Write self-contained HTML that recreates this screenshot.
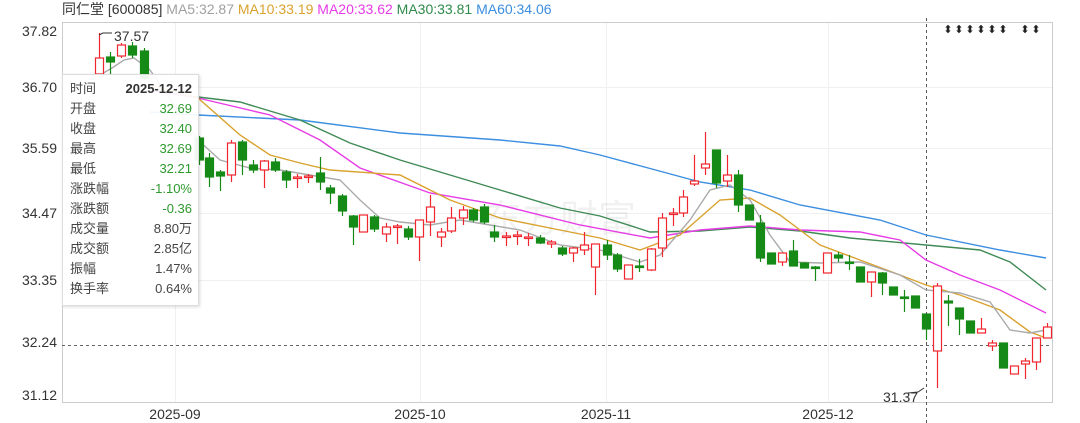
<!DOCTYPE html>
<html><head><meta charset="utf-8"><style>
body{margin:0;background:#fff;width:1080px;height:423px;overflow:hidden;font-family:"Liberation Sans","Noto Sans CJK SC",sans-serif;}
.t{position:absolute;font-size:14px;white-space:nowrap}
</style></head><body>
<div class="t" style="left:62px;top:-1px;color:#333">同仁堂 [600085] <span style="color:#a0a0a0">MA5:32.87</span> <span style="color:#d9a22e">MA10:33.19</span> <span style="color:#e63ce6">MA20:33.62</span> <span style="color:#2e8b4a">MA30:33.81</span> <span style="color:#3b8ee0">MA60:34.06</span></div>
<svg width="1080" height="423" style="position:absolute;left:0;top:0" font-family="Liberation Sans, sans-serif">
<g stroke="#f0f0f0" stroke-width="1">
<line x1="62" y1="87.5" x2="1052" y2="87.5"/><line x1="62" y1="148.5" x2="1052" y2="148.5"/><line x1="62" y1="213.5" x2="1052" y2="213.5"/><line x1="62" y1="280.5" x2="1052" y2="280.5"/>
<line x1="175.5" y1="22" x2="175.5" y2="402"/><line x1="420.5" y1="22" x2="420.5" y2="402"/><line x1="606.5" y1="22" x2="606.5" y2="402"/><line x1="828.5" y1="22" x2="828.5" y2="402"/>
</g>
<rect x="62.5" y="22.5" width="990" height="380" fill="none" stroke="#ccc"/>
<g font-size="14" fill="#333" text-anchor="end">
<text x="57" y="36">37.82</text><text x="57" y="92">36.70</text><text x="57" y="153">35.59</text><text x="57" y="218">34.47</text><text x="57" y="285">33.35</text><text x="57" y="347">32.24</text><text x="57" y="400">31.12</text>
</g>
<g font-size="14" fill="#333" text-anchor="middle">
<text x="175" y="419">2025-09</text><text x="420" y="419">2025-10</text><text x="606" y="419">2025-11</text><text x="828" y="419">2025-12</text>
</g>
<text x="560" y="232" font-size="38" fill="#000" opacity="0.05" text-anchor="middle" font-family="Noto Sans CJK SC, sans-serif">东方财富</text>
<line x1="62" y1="345.5" x2="1052" y2="345.5" stroke="#666" stroke-dasharray="3,3"/>
<line x1="926.5" y1="18" x2="926.5" y2="423" stroke="#555" stroke-dasharray="3,3"/>
<g fill="none" stroke-width="1.4">
<polyline stroke="#3b8ee0" points="150,112 198,115 300,120 400,133 500,140 560,146 600,155 700,182 750,190 800,205 880,220 926,235 1000,250 1046,258"/>
<polyline stroke="#3f8a55" points="150,90 198,97 240,102 300,120 350,143 400,160 450,175 500,190 560,208 600,216 650,232 700,231 750,227 800,231 850,238 926,245 980,250 1010,262 1046,290"/>
<polyline stroke="#e63ce6" points="150,90 198,98 270,115 320,140 360,168 430,193 500,205 580,225 650,238 700,230 750,226 800,230 860,232 900,240 926,260 960,275 1000,290 1046,313"/>
<polyline stroke="#d9a22e" points="150,85 198,98 240,135 270,155 300,163 330,170 400,175 450,200 500,218 560,230 600,238 640,250 680,235 720,200 750,198 780,215 820,245 860,260 900,275 926,285 960,295 1000,310 1030,332 1046,338"/>
<polyline stroke="#aaa" points="100,75 112,68 124,60 134,58 150,70 198,140 220,160 250,168 280,170 310,175 340,180 360,200 380,218 400,222 430,225 460,220 490,225 520,230 560,245 600,250 640,262 660,255 690,220 710,190 730,185 750,200 770,235 790,262 820,263 860,262 900,275 926,290 960,293 990,302 1010,330 1030,333 1046,330"/>
</g>
<g id="c"></g>
<g stroke="#333" fill="none"><polyline points="99,35 103,33 112,33"/><polyline points="924,388 918,392 908,393"/></g>
<text x="114" y="41" font-size="14" fill="#333">37.57</text>
<text x="883" y="402" font-size="14" fill="#333">31.37</text>
<g font-size="11" fill="#222" text-anchor="middle">
<text x="948" y="33">⬍</text><text x="959" y="33">⬍</text><text x="970" y="33">⬍</text><text x="981" y="33">⬍</text><text x="992" y="33">⬍</text><text x="1003" y="33">⬍</text><text x="1025" y="33">⬍</text><text x="1036" y="33">⬍</text>
</g>
</svg>
<div style="position:absolute;left:62px;top:74px;width:135px;height:230px;background:rgba(255,255,255,0.93);border:1px solid #ddd;box-shadow:1px 1px 3px rgba(0,0,0,.15);font-size:13px;line-height:20px;color:#444">
<div style="padding:4px 6px 0 7px">
<div style="display:flex;justify-content:space-between"><span>时间</span><b style="color:#333">2025-12-12</b></div>
<div style="display:flex;justify-content:space-between"><span>开盘</span><span style="color:#2e9a2e">32.69</span></div>
<div style="display:flex;justify-content:space-between"><span>收盘</span><span style="color:#2e9a2e">32.40</span></div>
<div style="display:flex;justify-content:space-between"><span>最高</span><span style="color:#2e9a2e">32.69</span></div>
<div style="display:flex;justify-content:space-between"><span>最低</span><span style="color:#2e9a2e">32.21</span></div>
<div style="display:flex;justify-content:space-between"><span>涨跌幅</span><span style="color:#2e9a2e">-1.10%</span></div>
<div style="display:flex;justify-content:space-between"><span>涨跌额</span><span style="color:#2e9a2e">-0.36</span></div>
<div style="display:flex;justify-content:space-between"><span>成交量</span><span>8.80万</span></div>
<div style="display:flex;justify-content:space-between"><span>成交额</span><span>2.85亿</span></div>
<div style="display:flex;justify-content:space-between"><span>振幅</span><span>1.47%</span></div>
<div style="display:flex;justify-content:space-between"><span>换手率</span><span>0.64%</span></div>
</div></div>
<script>
var d=[[99,33,58,74,74,1],[110,52,57,62,75,0],[121,43,45,56,58,1],[132,42,46,55,58,0],[144,48,51,78,80,0],
[199,136,138,160,165,0],[209,153,158,177,187,0],[220,170,172,176,191,0],[231,140,143,175,182,1],[242,140,142,160,175,0],[253,160,165,170,173,0],[264,160,161,170,188,1],[275,158,162,170,172,0],[286,170,172,180,188,0],[297,174,177,178,188,1],[308,174,176,177,183,1],[320,157,173,182,190,0],[330,185,188,193,204,0],[342,194,196,211,216,0],[353,215,216,227,245,0],[363,215,215,232,232,1],[374,215,217,229,232,0],[386,223,227,234,242,1],[397,224,226,227,244,1],[408,226,229,237,240,0],[419,220,220,237,261,1],[430,195,207,222,236,1],[441,228,232,237,247,1],[451,207,218,231,233,1],[463,206,210,218,225,1],[473,208,210,220,222,0],[484,204,207,222,224,0],[494,225,232,237,242,0],[506,232,236,237,246,1],[517,231,235,236,245,1],[528,233,237,238,246,1],[540,235,238,243,244,0],[551,240,242,244,248,1],[562,246,248,254,256,0],[573,247,248,253,262,1],[584,232,245,250,255,1],[595,244,244,267,295,1],[607,240,245,255,260,0],[617,253,255,269,272,0],[628,265,265,279,279,1],[639,259,266,267,272,0],[651,248,249,270,271,1],[662,213,218,248,257,1],[673,208,213,214,226,1],[683,190,197,213,217,1],[694,155,181,184,186,1],[705,132,164,168,175,1],[716,150,150,183,188,0],[727,155,175,181,187,1],[738,170,175,205,212,0],[749,205,205,220,220,0],[760,215,223,258,262,0],[771,253,253,264,264,0],[782,253,253,262,266,1],[793,240,251,266,266,0],[804,262,263,268,268,0],[815,266,267,268,281,0],[827,253,253,273,273,1],[838,252,255,258,262,0],[849,255,262,263,270,0],[860,267,267,282,282,0],[871,272,272,282,297,1],[882,272,273,283,295,0],[893,287,287,295,295,0],[904,290,297,298,312,0],[915,296,296,308,308,0],[926,314,314,329,340,0],[937,283,286,351,388,1],[948,295,301,303,326,0],[959,308,308,319,335,0],[970,321,321,333,333,0],[981,318,329,333,333,1],[992,340,343,346,351,1],[1003,343,343,368,368,0],[1014,366,366,374,374,1],[1025,358,361,364,379,1],[1036,338,338,362,370,1],[1047,323,327,338,338,1]];
var s='';d.forEach(function(c){var col=c[5]?'#f0262e':'#168a16';var h=Math.max(c[3]-c[2],1.5);
s+='<line x1="'+(c[0]+.5)+'" y1="'+c[1]+'" x2="'+(c[0]+.5)+'" y2="'+c[4]+'" stroke="'+col+'" stroke-width="1.2"/>';
s+='<rect x="'+(c[0]-3.5)+'" y="'+c[2]+'" width="8" height="'+h+'" fill="'+(c[5]?'#fff':col)+'" stroke="'+col+'" stroke-width="1.2"/>';});
document.getElementById('c').innerHTML=s;
</script>
</body></html>
